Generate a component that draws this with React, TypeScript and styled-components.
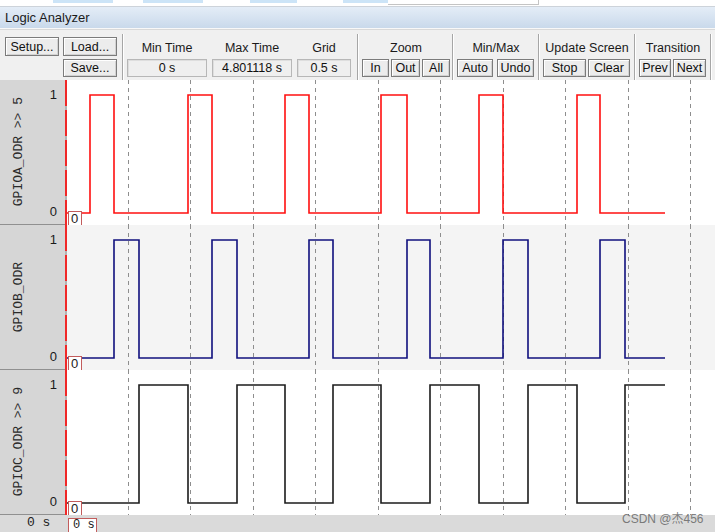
import React from 'react';
import styled, { createGlobalStyle } from 'styled-components';

const GlobalStyle = createGlobalStyle`
  html, body {
    margin: 0;
    padding: 0;
    background: #ffffff;
    overflow: hidden;
  }
  body {
    font-family: "Liberation Sans", Arial, sans-serif;
  }
`;

const Window = styled.div`
  position: relative;
  width: 715px;
  height: 532px;
  display: flex;
  flex-direction: column;
  overflow: hidden;
`;

// thin strip of the tab row above the window caption
const TopStrip = styled.div`
  height: 6px;
  display: flex;
  align-items: flex-start;
  background: #ffffff;
  border-bottom: 1px solid #cdd3da;
`;

const StripTab = styled.div<{ $outlined?: boolean }>`
  height: ${(p) => (p.$outlined ? '4px' : '3px')};
  background: ${(p) => (p.$outlined ? '#ffffff' : '#cce4f7')};
  border-right: ${(p) => (p.$outlined ? '1px solid #c4c4c4' : 'none')};
  border-bottom: ${(p) => (p.$outlined ? '1px solid #c4c4c4' : 'none')};
`;

const TitleBar = styled.div`
  height: 21px;
  padding-left: 5px;
  line-height: 22px;
  font-size: 13px;
  color: #1b1b1b;
  background: linear-gradient(#e4edf7, #c9d9eb);
  border-bottom: 1px solid #f8f8f8;
`;

const Toolbar = styled.div`
  box-sizing: border-box;
  height: 51px;
  display: flex;
  padding: 7px 0 3px 5px;
  background: #f0f0f0;
  border-top: 1px solid #d9d9d9;
`;

const Separator = styled.div`
  width: 0;
  margin: -3px 3px -3px;
  border-left: 1px solid #a6a6a6;
  border-right: 1px solid #ffffff;
`;

const Group = styled.div<{ $w: number }>`
  width: ${(p) => p.$w}px;
  display: grid;
  grid-template-rows: 20px 18px;
  row-gap: 2px;
`;

const FileGroup = styled(Group)`
  grid-template-columns: 54px 54px;
  column-gap: 4px;
`;

const TimeGroup = styled(Group)`
  grid-template-columns: 80px 80px 54px;
  column-gap: 5px;
`;

const Caption = styled.div<{ $span?: boolean }>`
  grid-column: ${(p) => (p.$span ? '1 / -1' : 'auto')};
  padding-top: 3px;
  line-height: 16px;
  font-size: 12.5px;
  text-align: center;
  color: #1a1a1a;
  white-space: nowrap;
`;

const Controls = styled.div<{ $gap: number }>`
  display: flex;
  gap: ${(p) => p.$gap}px;
`;

const TbButton = styled.button<{ $w: number; $tall?: boolean }>`
  box-sizing: border-box;
  width: ${(p) => p.$w}px;
  height: ${(p) => (p.$tall ? 19 : 18)}px;
  padding: 0;
  border: 1px solid #7b7b7b;
  box-shadow: inset 1px 1px 0 #ffffff, inset -1px -1px 0 #d2d2d2;
  background: #ececec;
  font-family: "Liberation Sans", Arial, sans-serif;
  font-size: 12.5px;
  line-height: 16px;
  color: #111;
  text-align: center;
  white-space: nowrap;
`;

const ValueBox = styled.div`
  box-sizing: border-box;
  height: 18px;
  border: 1px solid #b7b7b7;
  box-shadow: inset 1px 1px 0 #dedede;
  background: #efefef;
  font-size: 12.5px;
  line-height: 16px;
  text-align: center;
  color: #111;
`;

const Graph = styled.div`
  display: flex;
  flex-direction: column;
`;

const SignalRow = styled.div`
  height: 145px;
  display: flex;
`;

const Panel = styled.div`
  box-sizing: border-box;
  width: 65px;
  display: flex;
  background: #d6d6d6;
  border-bottom: 1px solid #909090;
`;

const SignalName = styled.div`
  width: 36px;
  display: flex;
  align-items: center;
  justify-content: center;

  span {
    writing-mode: vertical-rl;
    transform: rotate(180deg);
    font-family: "Liberation Mono", "DejaVu Sans Mono", monospace;
    font-size: 13px;
    color: #2a2a2a;
    white-space: nowrap;
  }
`;

const Levels = styled.div`
  flex: 1;
  display: flex;
  flex-direction: column;
  justify-content: space-between;
  align-items: flex-end;
  padding: 7px 8px 4px 0;
  font-size: 13px;
  line-height: 16px;
  color: #1a1a1a;
`;

const CursorLine = styled.div`
  width: 2px;
  background: repeating-linear-gradient(#f02828 0 26px, #b4b4b4 26px 30px);
`;

const Plot = styled.div<{ $shade?: boolean }>`
  flex: 1;
  background: ${(p) => (p.$shade ? '#f4f4f4' : '#ffffff')};

  svg {
    display: block;
  }
`;

const BottomBar = styled.div`
  flex: 1;
  display: flex;
  background: #dadada;
`;

const BottomTime = styled.div`
  width: 67px;
  padding-left: 27px;
  box-sizing: border-box;
  font-family: "Liberation Mono", "DejaVu Sans Mono", monospace;
  font-size: 13px;
  line-height: 16px;
  color: #222;
  white-space: pre;
`;

const TimeBox = styled.div`
  margin: 3px 0 0 1px;
  width: 29px;
  box-sizing: border-box;
  border: 1px solid #c25c5c;
  border-bottom: none;
  background: #ffffff;
  font-family: "Liberation Mono", "DejaVu Sans Mono", monospace;
  font-size: 12px;
  line-height: 13px;
  padding-left: 4px;
  white-space: pre;
  color: #222;
`;

const Watermark = styled.div`
  position: absolute;
  left: 622px;
  top: 509px;
  font-family: "Liberation Sans", "Noto Sans CJK SC", sans-serif;
  font-size: 12px;
  color: rgba(95, 95, 95, 0.8);
  white-space: nowrap;
`;

const stripTabs = [
  { gap: 53, w: 60 },
  { gap: 30, w: 60 },
  { gap: 47, w: 47 },
  { gap: 46, w: 45 },
];

const PLOT_W = 648;
const ROW_H = 145;
const HIGH = 15;
const LOW = 133;
const OFFSET = 67;

const gridXs = Array.from({ length: 10 }, (_, i) => Math.floor(65.5 + 62.5 * (i + 1) - OFFSET) + 0.5);

interface Signal {
  name: string;
  color: string;
  shade?: boolean;
  pulses: [number, number][];
}

const signals: Signal[] = [
  {
    name: 'GPIOA_ODR >> 5',
    color: '#ff1010',
    pulses: [[90, 114], [188, 212], [285, 309], [381, 407], [479, 503], [577, 600]],
  },
  {
    name: 'GPIOB_ODR',
    color: '#10107e',
    shade: true,
    pulses: [[114, 139], [212, 237], [309, 333], [407, 430], [503, 528], [600, 625]],
  },
  {
    name: 'GPIOC_ODR >> 9',
    color: '#1c1c1c',
    pulses: [[139, 188], [237, 285], [333, 381], [430, 479], [528, 577], [625, 666]],
  },
];

const wavePath = (pulses: [number, number][]) => {
  const end = 665 - OFFSET;
  let d = `M0 ${LOW}`;
  let high = false;
  pulses.forEach(([r, f]) => {
    const fx = Math.min(f - OFFSET, end);
    d += ` H${r - OFFSET} V${HIGH} H${fx}`;
    high = fx < end;
    if (high) d += ` V${LOW}`;
  });
  if (high) d += ` H${end}`;
  return d;
};

const Waveform: React.FC<{ signal: Signal }> = ({ signal }) => (
  <svg width={PLOT_W} height={ROW_H}>
    {gridXs.map((x) => (
      <line key={x} x1={x} y1={0} x2={x} y2={ROW_H} stroke="#8e8e8e" strokeWidth={1} strokeDasharray="4 4" />
    ))}
    <path d={wavePath(signal.pulses)} fill="none" stroke={signal.color} strokeWidth={1.6} />
    <rect x={1.5} y={LOW - 1.5} width={13} height={ROW_H - LOW + 2} fill="#ffffff" stroke="#c25c5c" />
    <text x={4} y={ROW_H - 2} fontSize={13} fontFamily="Liberation Sans, Arial, sans-serif" fill="#222">
      0
    </text>
  </svg>
);

const App: React.FC = () => (
  <Window>
    <GlobalStyle />
    <TopStrip>
      {stripTabs.map((t, i) => (
        <StripTab key={i} style={{ marginLeft: t.gap, width: t.w }} />
      ))}
      <StripTab $outlined style={{ width: 150 }} />
    </TopStrip>
    <TitleBar>Logic Analyzer</TitleBar>
    <Toolbar>
      <FileGroup $w={114}>
        <TbButton $w={54} $tall>Setup...</TbButton>
        <TbButton $w={54} $tall>Load...</TbButton>
        <span />
        <TbButton $w={54}>Save...</TbButton>
      </FileGroup>
      <Separator />
      <TimeGroup $w={227}>
        <Caption>Min Time</Caption>
        <Caption>Max Time</Caption>
        <Caption>Grid</Caption>
        <ValueBox>0 s</ValueBox>
        <ValueBox>4.801118 s</ValueBox>
        <ValueBox>0.5 s</ValueBox>
      </TimeGroup>
      <Separator />
      <Group $w={87}>
        <Caption $span>Zoom</Caption>
        <Controls $gap={2}>
          <TbButton $w={27}>In</TbButton>
          <TbButton $w={29}>Out</TbButton>
          <TbButton $w={28}>All</TbButton>
        </Controls>
      </Group>
      <Separator />
      <Group $w={78}>
        <Caption $span>Min/Max</Caption>
        <Controls $gap={4}>
          <TbButton $w={36}>Auto</TbButton>
          <TbButton $w={37}>Undo</TbButton>
        </Controls>
      </Group>
      <Separator />
      <Group $w={88}>
        <Caption $span>Update Screen</Caption>
        <Controls $gap={2}>
          <TbButton $w={43}>Stop</TbButton>
          <TbButton $w={42}>Clear</TbButton>
        </Controls>
      </Group>
      <Separator />
      <Group $w={68}>
        <Caption $span>Transition</Caption>
        <Controls $gap={2}>
          <TbButton $w={32}>Prev</TbButton>
          <TbButton $w={33}>Next</TbButton>
        </Controls>
      </Group>
      <Separator />
    </Toolbar>
    <Graph>
      {signals.map((s) => (
        <SignalRow key={s.name}>
          <Panel>
            <SignalName>
              <span>{s.name}</span>
            </SignalName>
            <Levels>
              <span>1</span>
              <span>0</span>
            </Levels>
          </Panel>
          <CursorLine />
          <Plot $shade={s.shade}>
            <Waveform signal={s} />
          </Plot>
        </SignalRow>
      ))}
    </Graph>
    <BottomBar>
      <BottomTime>0 s</BottomTime>
      <TimeBox>0 s</TimeBox>
    </BottomBar>
    <Watermark>CSDN @杰456</Watermark>
  </Window>
);

export default App;
